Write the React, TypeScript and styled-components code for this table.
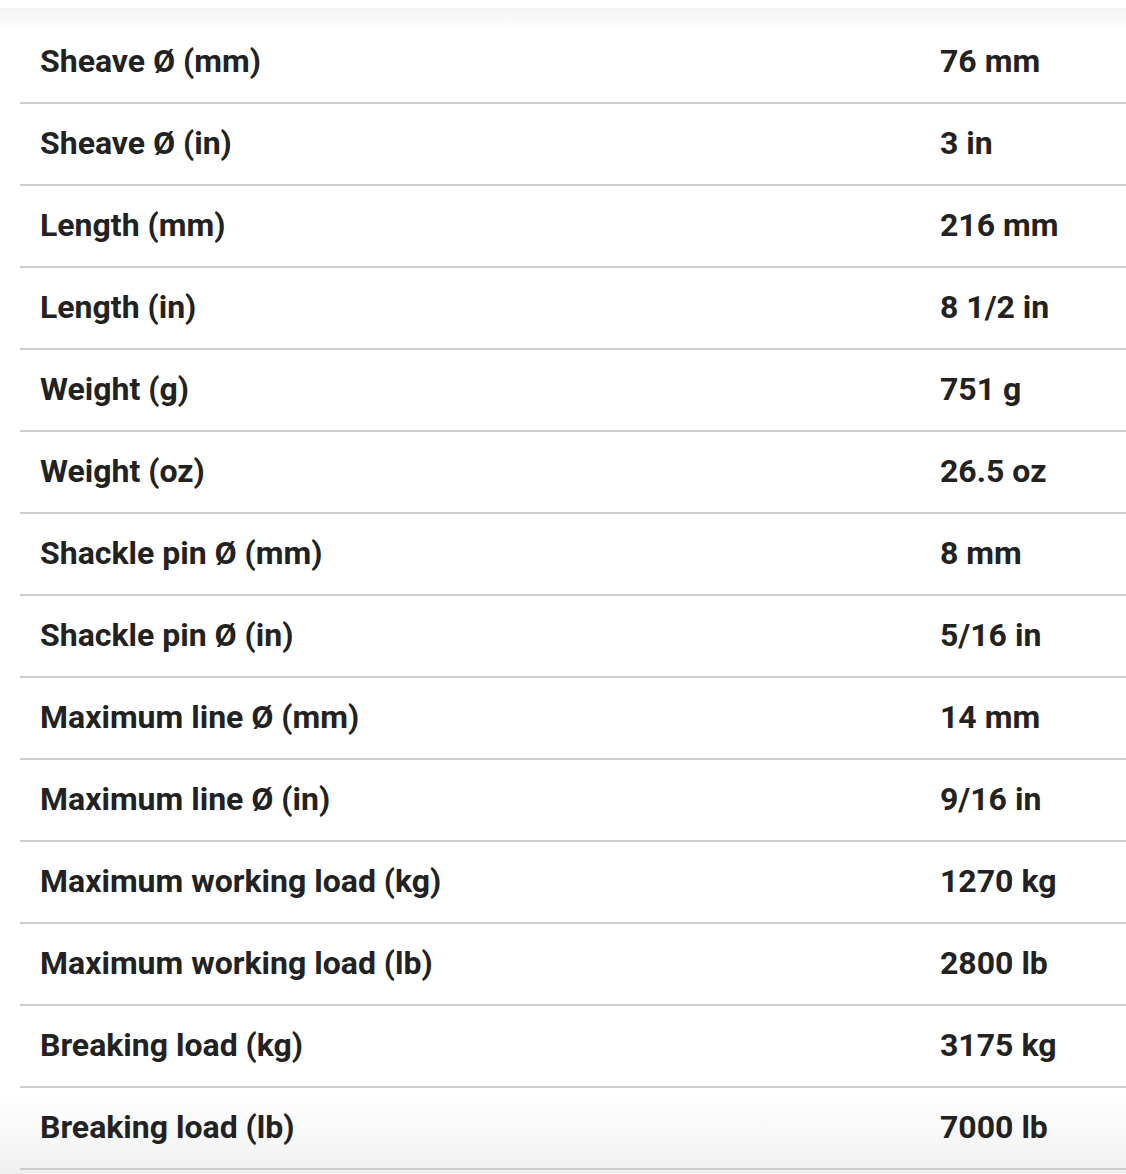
import React from 'react';
import styled, { createGlobalStyle } from 'styled-components';

const GlobalStyle = createGlobalStyle`
  html, body {
    margin: 0;
    padding: 0;
    background: #fff;
  }
  body {
    font-family: Roboto, "Liberation Sans", Arial, sans-serif;
    color: #222;
  }
`;

const SpecsPanel = styled.div`
  position: relative;
  margin-top: 8px;
  padding: 14px 0 6px 20px;
  background: linear-gradient(to bottom, #f3f3f3 0px, #fff 22px, #fff calc(100% - 80px), #efefef 100%);
  overflow: hidden;
`;

const SpecsTable = styled.table`
  width: 100%;
  border-collapse: collapse;
`;

const SpecRow = styled.tr`
  border-bottom: 2px solid #cdcdcd;
`;

const Label = styled.td`
  height: 78px;
  padding: 0 20px 2px;
  font-size: 32px;
  font-weight: 700;
  line-height: 1;
  vertical-align: middle;
`;

const Value = styled(Label)`
  width: 166px;
`;

const specs: [string, string][] = [
  ['Sheave Ø (mm)', '76 mm'],
  ['Sheave Ø (in)', '3 in'],
  ['Length (mm)', '216 mm'],
  ['Length (in)', '8 1/2 in'],
  ['Weight (g)', '751 g'],
  ['Weight (oz)', '26.5 oz'],
  ['Shackle pin Ø (mm)', '8 mm'],
  ['Shackle pin Ø (in)', '5/16 in'],
  ['Maximum line Ø (mm)', '14 mm'],
  ['Maximum line Ø (in)', '9/16 in'],
  ['Maximum working load (kg)', '1270 kg'],
  ['Maximum working load (lb)', '2800 lb'],
  ['Breaking load (kg)', '3175 kg'],
  ['Breaking load (lb)', '7000 lb'],
];

export default function App() {
  return (
    <>
      <GlobalStyle />
      <SpecsPanel>
        <SpecsTable>
          <tbody>
            {specs.map(([label, value]) => (
              <SpecRow key={label}>
                <Label>{label}</Label>
                <Value>{value}</Value>
              </SpecRow>
            ))}
          </tbody>
        </SpecsTable>
      </SpecsPanel>
    </>
  );
}
